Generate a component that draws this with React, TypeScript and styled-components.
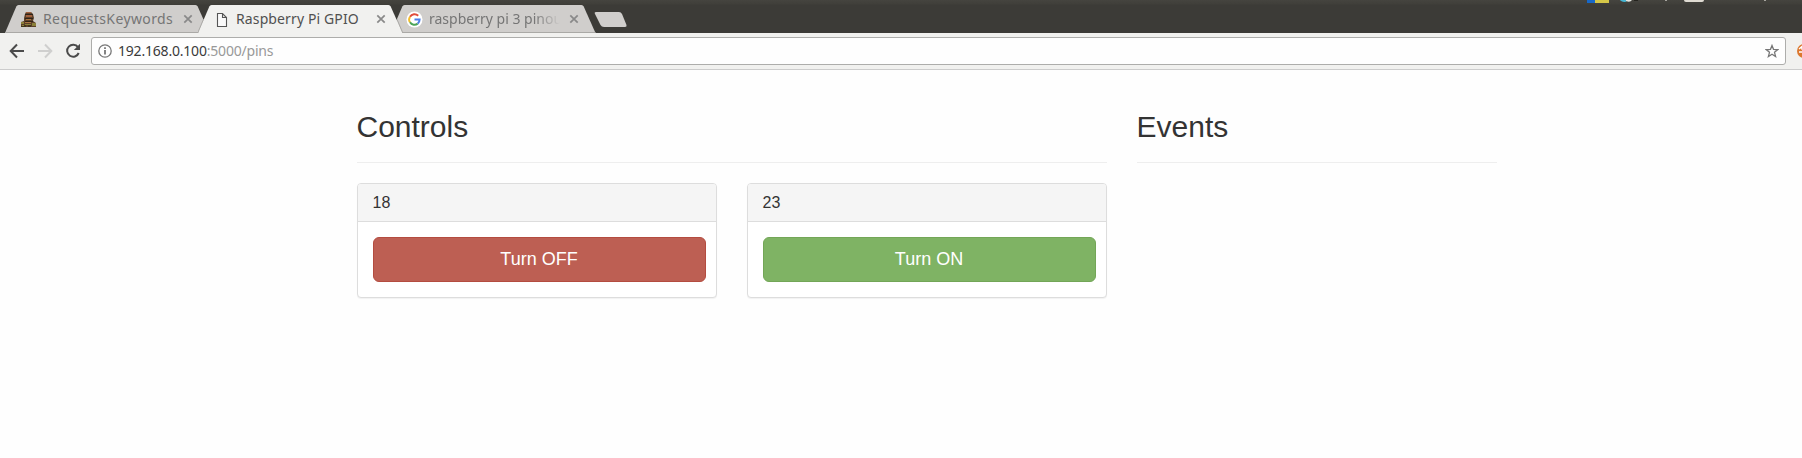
import React from "react";
import styled, { createGlobalStyle } from "styled-components";

const Global = createGlobalStyle`
  *, *::before, *::after { box-sizing: border-box; }
  body { margin: 0; background: #fefefe; font-family: "Liberation Sans", Arial, sans-serif; color: #333; overflow: hidden; }
`;

const Window = styled.div`
  display: flex;
  flex-direction: column;
  height: 458px;
  overflow: hidden;
`;

const TabStrip = styled.div`
  position: relative;
  height: 33px;
  flex: none;
  padding: 5px 0 0 5px;
  display: flex;
  align-items: flex-start;
  background: linear-gradient(#45443f 0, #403f3a 4px, #3c3b37 5px);
`;

const Tab = styled.div<{ $active?: boolean }>`
  position: relative;
  z-index: ${(p) => (p.$active ? 2 : 1)};
  width: 205px;
  height: 28px;
  margin-right: -12px;
  display: flex;
  align-items: center;
  padding: 0 10px 0 15px;
  color: ${(p) => (p.$active ? "#505050" : "#757575")};
`;

const TabShape = styled.svg`
  position: absolute;
  left: 0;
  top: 0;
  width: 205px;
  height: 28px;
`;

const Favicon = styled.svg`
  position: relative;
  flex: none;
  width: 17px;
  height: 17px;
`;

const TabTitle = styled.span<{ $gap: number; $spacing: number; $fade?: boolean }>`
  position: relative;
  width: 134px;
  margin-left: ${(p) => p.$gap}px;
  font: 14px/20px "Noto Sans", "Open Sans", sans-serif;
  letter-spacing: ${(p) => p.$spacing}px;
  white-space: nowrap;
  overflow: hidden;
  ${(p) => p.$fade && "mask-image: linear-gradient(90deg, #000 105px, transparent 131px);"}
`;

const CloseIcon = styled.svg`
  position: absolute;
  left: 178px;
  top: 9px;
  width: 10px;
  height: 10px;
`;

const NewTab = styled.svg`
  width: 34px;
  height: 16px;
  margin: 7px 0 0 10px;
`;

const Indicators = styled.svg`
  position: absolute;
  left: 1580px;
  top: 0;
  width: 200px;
  height: 4px;
`;

const Toolbar = styled.div`
  flex: none;
  height: 37px;
  display: flex;
  align-items: center;
  padding: 0 0 1px 9px;
  background: #f1f1ef;
  border-bottom: 1px solid #ccc;
`;

const NavIcons = styled.div`
  flex: none;
  display: flex;
  gap: 12px;
  margin-right: 10px;
`;

const NavIcon = styled.svg`
  width: 16px;
  height: 16px;
`;

const Omnibox = styled.div`
  flex: none;
  width: 1695px;
  height: 28px;
  display: flex;
  align-items: center;
  justify-content: space-between;
  padding: 0 6px;
  background: #fefefe;
  border: 1px solid #adadab;
  border-radius: 3px;
`;

const Location = styled.div`
  display: flex;
  align-items: center;
`;

const InfoIcon = styled.svg`
  width: 14px;
  height: 14px;
`;

const Url = styled.span`
  margin-left: 6px;
  font: 14px/20px "Noto Sans", "Open Sans", sans-serif;
  letter-spacing: -0.2px;
  color: #3a3a3a;
`;

const UrlRest = styled.span`
  color: #999;
`;

const StarIcon = styled.svg`
  width: 14px;
  height: 14px;
`;

const Extension = styled.svg`
  flex: none;
  width: 14px;
  height: 14px;
  margin-left: 11px;
`;

const Page = styled.main`
  width: 1140px;
  margin-left: 356.5px;
  padding-top: 40px;
  display: flex;
  gap: 30px;
`;

const Section = styled.section<{ $width: number }>`
  width: ${(p) => p.$width}px;
`;

const Heading = styled.h2`
  margin: 0;
  height: 53px;
  padding-bottom: 20px;
  border-bottom: 1px solid #eee;
  font-size: 30px;
  font-weight: 500;
  line-height: 33px;
`;

const Cards = styled.div`
  display: flex;
  gap: 30px;
  margin-top: 20px;
`;

const Card = styled.article`
  width: 360px;
  height: 115px;
  border: 1px solid #ddd;
  border-radius: 4px;
  background: #fff;
  box-shadow: 0 1px 1px rgba(0, 0, 0, 0.05);
`;

const CardHeader = styled.h3`
  margin: 0;
  height: 38px;
  padding: 10px 15px;
  font-size: 16px;
  font-weight: 500;
  line-height: 18px;
  background: #f5f5f5;
  border-bottom: 1px solid #ddd;
  border-radius: 3px 3px 0 0;
`;

const CardBody = styled.div`
  padding: 15px;
`;

const SwitchButton = styled.button<{ $on?: boolean }>`
  display: block;
  width: 333px;
  height: 45px;
  padding: 0 0 2px;
  font: 18px/24px "Liberation Sans", Arial, sans-serif;
  color: #fff;
  background: ${(p) => (p.$on ? "#7fb364" : "#bd5f53")};
  border: 1px solid ${(p) => (p.$on ? "#73a657" : "#b44c40")};
  border-radius: 6px;
`;

const TabFrame = ({ active }: { active?: boolean }) => (
  <TabShape viewBox="0 0 205 28">
    <path d="M0 28 L11.300 1.500 Q12 0 13.500 0 H190.500 Q192 0 192.700 1.500 L204.500 28Z" fill={active ? "#f1f1ef" : "#d0cecc"} />
    {!active && <path d="M0.500 27.500H204.500" stroke="#aaa9a6" />}
    {active && <path d="M-.3 28 L5.600 14M204.800 28 L198.900 14" stroke="#aaa9a6" strokeWidth="1" />}
  </TabShape>
);

const Close = () => (
  <CloseIcon viewBox="0 0 10 10">
    <path d="M1.300 1.300 8.700 8.700M8.700 1.300 1.300 8.700" stroke="#898989" strokeWidth="1.700" />
  </CloseIcon>
);

const StatueIcon = () => (
  <Favicon viewBox="0 0 17 17">
    <path d="M6 1h5l2 2 1 4-1 3 3 2v4H1v-5l3-1V7l1-4Z" fill="#5c4028" />
    <path d="M6 1h5v1H6ZM6 4h6v2H6Z" fill="#a05f3c" />
    <path d="M5 3h8v1H5ZM5 7h8v1H5ZM5 10h8v1H5Z" fill="#302318" />
    <path d="M6 8h5v1H6ZM5 11h6v1H5Z" fill="#a8733f" />
    <path d="M1 11h3v2H1ZM12 12h4v3h-4ZM5 13h6v1H5ZM2 14h2v1H2Z" fill="#8a8039" />
    <path d="M4 14h2v2H4ZM8 14h3v2H8ZM1 15h3v1H1Z" fill="#40351d" />
  </Favicon>
);

const PageIcon = () => (
  <Favicon viewBox="0 0 17 17">
    <path d="M4.500 2.500h5l4 4v9h-9ZM9.500 2.500v4h4" fill="#fafafa" stroke="#555" strokeWidth="1.100" />
  </Favicon>
);

const GoogleIcon = () => (
  <Favicon viewBox="0 0 17 17">
    <circle cx="8.500" cy="8.500" r="8" fill="#fff" />
    <path d="M4 5.700A5.200 5.200 0 0 1 12.200 4.700" fill="none" stroke="#e04b3a" strokeWidth="2" />
    <path d="M4 5.700A5.200 5.200 0 0 0 4 11.300" fill="none" stroke="#f3bd2c" strokeWidth="2" />
    <path d="M4 11.300A5.200 5.200 0 0 0 11.700 12.600" fill="none" stroke="#4ba457" strokeWidth="2" />
    <path d="M8.500 8.600h5.100q0 2.600-1.900 4" fill="none" stroke="#4c7fe8" strokeWidth="2" />
  </Favicon>
);

const pins = [
  { id: 18, on: false },
  { id: 23, on: true },
];

export default function App() {
  return (
    <Window>
      <Global />
      <TabStrip>
        <Tab>
          <TabFrame />
          <StatueIcon />
          <TabTitle $gap={6} $spacing={0.39}>RequestsKeywords</TabTitle>
          <Close />
        </Tab>
        <Tab $active>
          <TabFrame active />
          <PageIcon />
          <TabTitle $gap={6} $spacing={0.12}>Raspberry Pi GPIO</TabTitle>
          <Close />
        </Tab>
        <Tab>
          <TabFrame />
          <GoogleIcon />
          <TabTitle $gap={6} $spacing={0} $fade>raspberry pi 3 pinou</TabTitle>
          <Close />
        </Tab>
        <NewTab viewBox="0 0 34 16">
          <path d="M2 0H25Q27 0 28 2L32.500 13Q33 15 31 15H10Q7.500 15 6.500 13L1 2Q0 0 2 0Z" fill="#d0cecc" />
        </NewTab>
        <Indicators viewBox="0 0 200 4">
          <path d="M7 0h9v3H7Z" fill="#1768c9" />
          <path d="M15 0h14v3H15Z" fill="#d5c748" />
          <path d="M40 0h7v1q-2 2-6 0Z" fill="#46b5d2" />
          <path d="M46 0h6q-2 3-6 1Z" fill="#e5e5e0" />
          <path d="M54 0h4v1h-4Z" fill="#25241f" />
          <path d="M85 0h2v1h-2ZM184 0h2v1h-2Z" fill="#a6a49e" />
          <path d="M104 0h20q0 2-2 2h-16q-2 0-2-2Z" fill="#dfdbd2" />
        </Indicators>
      </TabStrip>
      <Toolbar>
        <NavIcons>
          <NavIcon viewBox="0 0 16 16">
            <path d="M15 8H2M8 1.500 1.700 8 8 14.500" fill="none" stroke="#4b4b4b" strokeWidth="2" />
          </NavIcon>
          <NavIcon viewBox="0 0 16 16">
            <path d="M1 8H14M8 1.500 14.300 8 8 14.500" fill="none" stroke="#cfcfce" strokeWidth="2" />
          </NavIcon>
          <NavIcon viewBox="0 0 16 16">
            <path d="M13 4.200A6 6 0 1 0 13.700 10" fill="none" stroke="#4b4b4b" strokeWidth="2" />
            <path d="M15 .8V7H8.800Z" fill="#4b4b4b" />
          </NavIcon>
        </NavIcons>
        <Omnibox>
          <Location>
            <InfoIcon viewBox="0 0 14 14">
              <circle cx="7" cy="7" r="6.200" fill="none" stroke="#777" strokeWidth="1.300" />
              <path d="M7 6v4.500M7 3.300v1.600" stroke="#666" strokeWidth="1.600" />
            </InfoIcon>
            <Url>192.168.0.100<UrlRest>:5000/pins</UrlRest></Url>
          </Location>
          <StarIcon viewBox="0 0 14 14">
            <path d="M7 1.500 8.500 5.300 12.800 5.600 9.500 8.300 10.600 12.500 7 10.200 3.400 12.500 4.500 8.300 1.200 5.600 5.500 5.300Z" fill="none" stroke="#777" strokeWidth="1.300" />
          </StarIcon>
        </Omnibox>
        <Extension viewBox="0 0 14 14">
          <circle cx="7" cy="7" r="7" fill="#dc772e" />
          <path d="M2 5 5 2.500V5H8M2 8H6V11" fill="none" stroke="#fff" strokeWidth="1.400" />
        </Extension>
      </Toolbar>
      <Page>
        <Section $width={750}>
          <Heading>Controls</Heading>
          <Cards>
            {pins.map((pin) => (
              <Card key={pin.id}>
                <CardHeader>{pin.id}</CardHeader>
                <CardBody>
                  <SwitchButton $on={pin.on}>{pin.on ? "Turn ON" : "Turn OFF"}</SwitchButton>
                </CardBody>
              </Card>
            ))}
          </Cards>
        </Section>
        <Section $width={360}>
          <Heading>Events</Heading>
        </Section>
      </Page>
    </Window>
  );
}
